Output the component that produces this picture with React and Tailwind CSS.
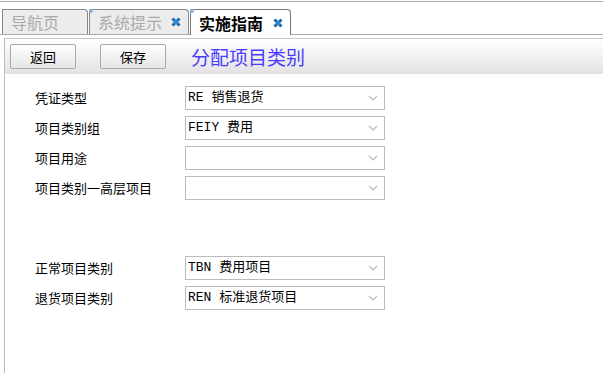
import React from 'react';

const cjk = { fontFamily: '"Noto Sans CJK SC", "Liberation Sans", sans-serif' };
const mono = { fontFamily: '"Liberation Mono", "Noto Sans CJK SC", monospace' };

function CloseIcon() {
  return (
    <svg width="10" height="10" viewBox="0 0 10 10" className="shrink-0">
      <path d="M1.5 1.5 L8.5 8.5 M8.5 1.5 L1.5 8.5" stroke="#1d6aaa" strokeWidth="3" strokeLinecap="butt" />
      <rect x="3" y="3" width="4" height="4" fill="#2b87cf" />
    </svg>
  );
}

function Tab({ label, active, closable }) {
  return (
    <div
      className={`relative flex items-center h-[25px] border border-b-0 rounded-tr-[4px] ${
        active ? 'bg-white border-[#777] w-[101px] h-[26px] -mb-px' : 'bg-[#ececec] border-[#888] w-[100px]'
      }`}
    >
      <span className={`pl-[8px] text-[16px] leading-none ${active ? 'font-bold text-black' : 'text-[#aaa]'}`}>
        {label}
      </span>
      {closable && (
        <span className="ml-auto mr-[7px]">
          <CloseIcon />
        </span>
      )}
      <span className="absolute -left-px -top-px w-[4px] h-[4px] border-l-[3px] border-t-[3px] border-[#8fb3d8] border-r-0 border-b-0" />
    </div>
  );
}

function Select({ value }) {
  return (
    <div className="flex items-center w-[200px] h-[24px] border border-[#bbb] bg-white">
      <span className="pl-[2px] text-[13px] text-black whitespace-pre" style={mono}>{value}</span>
      <svg width="10" height="6" viewBox="0 0 10 6" className="ml-auto mr-[6px]">
        <path d="M1 1 L5 5 L9 1" fill="none" stroke="#bbb" strokeWidth="1.2" />
      </svg>
    </div>
  );
}

function Row({ label, value }) {
  return (
    <div className="flex items-center h-[24px]">
      <span className="w-[150px] text-[13px] text-black" style={cjk}>{label}</span>
      <Select value={value} />
    </div>
  );
}

export default function App() {
  return (
    <div className="w-[603px] h-[373px] bg-white overflow-hidden" style={cjk}>
      <div className="h-[2px] border-b border-[#aaa]" />
      <div className="flex items-end gap-px pl-[2px] pt-[5px] h-[33px] border-b border-[#aaa]">
        <div className="w-[86px]">
          <div className="relative flex items-center h-[25px] border border-b-0 border-[#888] bg-[#ececec] rounded-tr-[4px]">
            <span className="pl-[8px] text-[16px] leading-none text-[#aaa]">导航页</span>
          </div>
        </div>
        <Tab label="系统提示" closable />
        <Tab label="实施指南" active closable />
      </div>
      <div className="ml-[4px] border-l border-[#bbb] h-[340px]">
        <div className="mt-[3px] h-[36px] border-t border-[#c8c8c8] bg-gradient-to-b from-white to-[#e2e2e2] flex items-center pl-[5px]">
          <button className="w-[66px] h-[25px] border border-[#aaa] rounded-[2px] bg-gradient-to-b from-white to-[#e6e6e6] text-[13px] text-black">
            返回
          </button>
          <button className="ml-[24px] w-[66px] h-[25px] border border-[#aaa] rounded-[2px] bg-gradient-to-b from-white to-[#e6e6e6] text-[13px] text-black">
            保存
          </button>
          <span className="ml-[25px] text-[19px] leading-none text-[#4a3cff]">分配项目类别</span>
        </div>
        <div className="pl-[30px] pt-[12px] flex flex-col gap-[6px]">
          <Row label="凭证类型" value="RE 销售退货" />
          <Row label="项目类别组" value="FEIY 费用" />
          <Row label="项目用途" value="" />
          <Row label="项目类别一高层项目" value="" />
          <div className="h-[44px]" />
          <Row label="正常项目类别" value="TBN 费用项目" />
          <Row label="退货项目类别" value="REN 标准退货项目" />
        </div>
      </div>
    </div>
  );
}
